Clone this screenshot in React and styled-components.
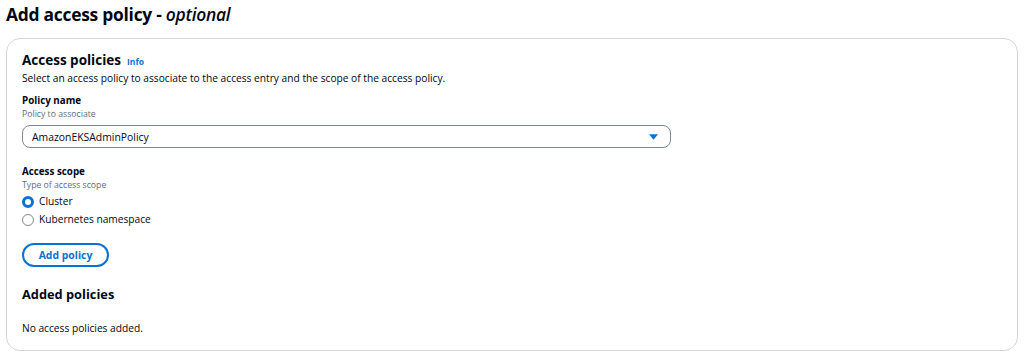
import React from "react";
import styled, { createGlobalStyle } from "styled-components";

const GlobalStyle = createGlobalStyle`
  html, body {
    margin: 0;
    padding: 0;
    background: #fff;
  }
  body {
    font-family: "Open Sans", "Noto Sans", sans-serif;
    color: #000716;
  }
`;

const Page = styled.div`
  width: 1024px;
  height: 355px;
  padding: 2px 6px 0 6px;
  box-sizing: border-box;
`;

const Title = styled.h1`
  margin: 0;
  font-size: 17.4px;
  line-height: 24px;
  font-weight: 700;
  letter-spacing: -0.25px;

  em {
    font-weight: 600;
    font-style: italic;
  }
`;

const Card = styled.section`
  margin-top: 12px;
  border: 1px solid #d5d5d9;
  border-radius: 14px;
  padding: 12px 15px 14px 15px;
  height: 313px;
  box-sizing: border-box;
  display: flex;
  flex-direction: column;
`;

const HeadingRow = styled.div`
  display: flex;
  align-items: baseline;
  gap: 6px;
`;

const Heading = styled.h2`
  margin: 0;
  font-size: ${(p) => p.size || 13.5}px;
  line-height: 18px;
  font-weight: 700;
`;

const InfoLink = styled.a`
  color: #0972d3;
  font-size: 8.5px;
  font-weight: 700;
  text-decoration: none;
`;

const Description = styled.p`
  margin: 2px 0 0 0;
  font-size: 10.2px;
  line-height: 14px;
`;

const Field = styled.div`
  display: flex;
  flex-direction: column;
  margin-top: ${(p) => p.top || 0}px;
`;

const Label = styled.div`
  font-size: 9.8px;
  font-weight: 700;
  line-height: 14px;
`;

const Hint = styled.div`
  font-size: 8.7px;
  line-height: 12px;
  color: #5f6b7a;
`;

const Select = styled.div`
  margin-top: 5px;
  width: 649px;
  height: 23px;
  box-sizing: border-box;
  border: 1px solid #7d8998;
  border-radius: 8px;
  display: flex;
  align-items: center;
  justify-content: space-between;
  padding: 0 12px 0 9px;
  font-size: 10.4px;
`;

const Caret = styled.svg`
  width: 9px;
  height: 6px;
`;

const RadioList = styled.div`
  display: flex;
  flex-direction: column;
  gap: 5px;
  margin-top: 4px;
`;

const RadioRow = styled.label`
  display: flex;
  align-items: center;
  gap: 5px;
  font-size: 10.2px;
  line-height: 13px;
`;

const RadioDot = styled.span`
  width: 12px;
  height: 12px;
  box-sizing: border-box;
  border-radius: 50%;
  border: ${(p) => (p.checked ? "3.5px solid #0972d3" : "1.5px solid #7d8998")};
  background: #fff;
`;

const Button = styled.button`
  margin-top: 17px;
  align-self: flex-start;
  width: 87px;
  height: 24px;
  border: 2px solid #0972d3;
  border-radius: 20px;
  background: #fff;
  color: #0972d3;
  font-family: inherit;
  font-size: 10.4px;
  font-weight: 700;
  padding: 0;
`;

const Added = styled.div`
  margin-top: 18px;
  display: flex;
  flex-direction: column;
  gap: 18px;
`;

const Empty = styled.p`
  margin: 0;
  font-size: 10.2px;
  line-height: 14px;
`;

export default function App() {
  return (
    <Page>
      <GlobalStyle />
      <Title>
        Add access policy - <em>optional</em>
      </Title>
      <Card>
        <HeadingRow>
          <Heading>Access policies</Heading>
          <InfoLink href="#">Info</InfoLink>
        </HeadingRow>
        <Description>
          Select an access policy to associate to the access entry and the scope of the access policy.
        </Description>

        <Field top={9}>
          <Label>Policy name</Label>
          <Hint>Policy to associate</Hint>
          <Select>
            <span>AmazonEKSAdminPolicy</span>
            <Caret viewBox="0 0 10 6">
              <path d="M0 0 L10 0 L5 6 Z" fill="#0972d3" />
            </Caret>
          </Select>
        </Field>

        <Field top={17}>
          <Label>Access scope</Label>
          <Hint>Type of access scope</Hint>
          <RadioList>
            <RadioRow>
              <RadioDot checked />
              Cluster
            </RadioRow>
            <RadioRow>
              <RadioDot />
              Kubernetes namespace
            </RadioRow>
          </RadioList>
        </Field>

        <Button>Add policy</Button>

        <Added>
          <Heading size={12.8}>Added policies</Heading>
          <Empty>No access policies added.</Empty>
        </Added>
      </Card>
    </Page>
  );
}
